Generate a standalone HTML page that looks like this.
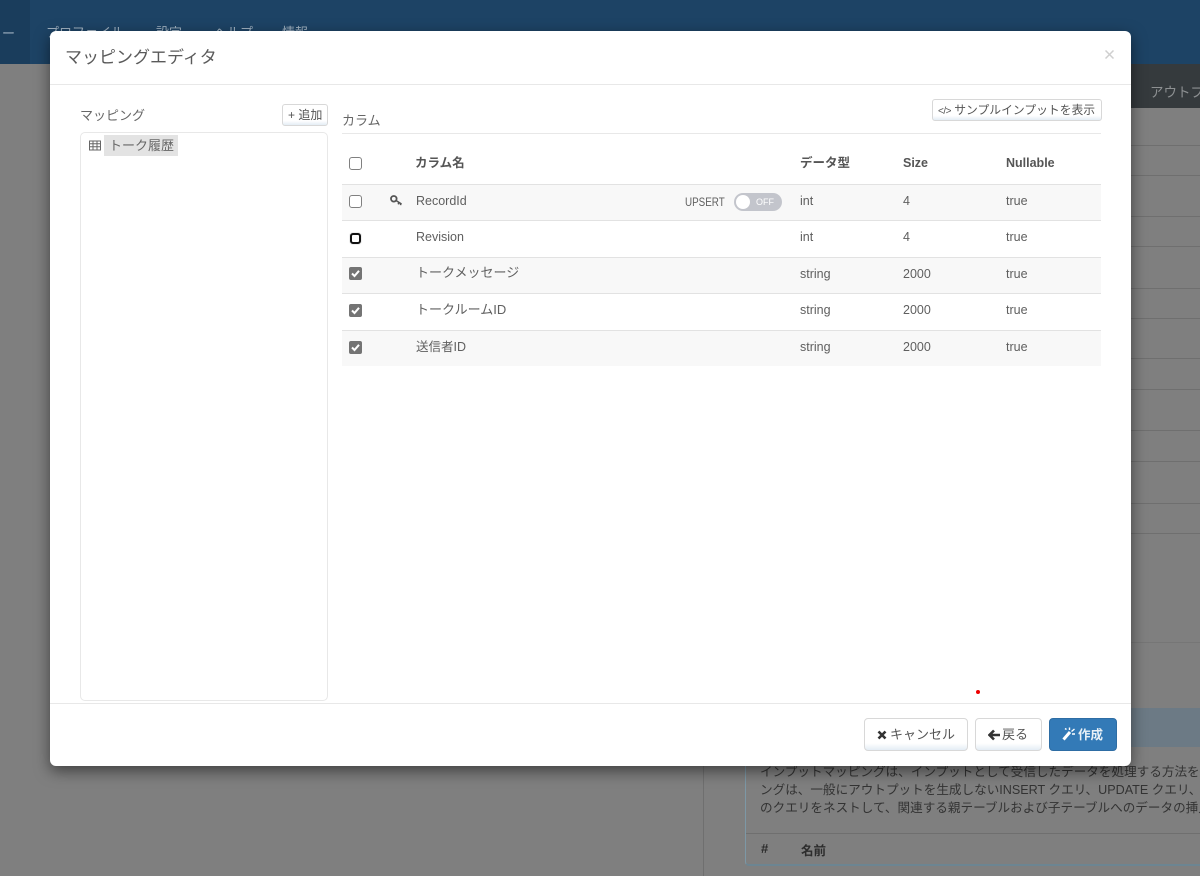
<!DOCTYPE html>
<html lang="ja"><head><meta charset="utf-8">
<style>
*{box-sizing:border-box}
html,body{margin:0;padding:0;width:1200px;height:876px;overflow:hidden;background:#7f7f7f;font-family:"Liberation Sans","Noto Sans CJK JP",sans-serif;color:#555}
.a{position:absolute;white-space:nowrap}
.ln{position:absolute;height:1px;background:#6f6f6f;left:1131px;width:69px}
.modal{position:absolute;left:50px;top:31px;width:1081px;height:735px;background:#fff;border-radius:6px;box-shadow:0 5px 15px rgba(0,0,0,.5)}
.r{position:absolute;left:342px;width:759px}
.t{position:absolute;font-size:12.5px;color:#5f5f5f;white-space:nowrap}
.cb{position:absolute;left:349px;width:13px;height:13px;border:1px solid #808080;border-radius:3px;background:#fff}
.cb.c{background:#747474;border-color:#747474;border-radius:2px}
.cb svg{position:absolute;left:0;top:0}
.btn{position:absolute;border:1px solid #d8d8d8;border-radius:4px;background:linear-gradient(#fff 78%,#e4edf5);white-space:nowrap}
</style></head><body>
<div class="a" style="left:0;top:0;width:1200px;height:64px;background:#1d4365"></div>
<div class="a" style="left:0;top:0;width:30px;height:64px;background:#1a3d5c"></div>
<div class="a" style="left:2px;top:23px;font-size:13px;color:#9fb0bf">ー</div>
<div class="a" style="left:46px;top:22px;font-size:13px;color:#9fb0bf">プロファイル</div>
<div class="a" style="left:156px;top:22px;font-size:13px;color:#9fb0bf">設定</div>
<div class="a" style="left:214px;top:22px;font-size:13px;color:#9fb0bf">ヘルプ</div>
<div class="a" style="left:282px;top:22px;font-size:13px;color:#9fb0bf">情報</div>
<div class="a" style="left:1131px;top:64px;width:69px;height:44px;background:#353a3d"></div>
<div class="a" style="left:1150px;top:81px;font-size:13.500px;color:#8d9092">アウトプット</div>
<div class="ln" style="top:145px"></div><div class="ln" style="top:175px"></div><div class="ln" style="top:216px"></div><div class="ln" style="top:246px"></div><div class="ln" style="top:288px"></div><div class="ln" style="top:318px"></div><div class="ln" style="top:358px"></div><div class="ln" style="top:389px"></div><div class="ln" style="top:430px"></div><div class="ln" style="top:461px"></div><div class="ln" style="top:503px"></div><div class="ln" style="top:533px"></div><div class="ln" style="top:642px;background:#767676"></div>
<div class="a" style="left:703px;top:766px;width:1px;height:110px;background:#6f6f6f"></div>
<div class="a" style="left:745px;top:708px;width:455px;height:158px;border:1px solid #7d98a6;border-right:0;border-radius:4px 0 0 4px;border-bottom:2px solid #6c8592"></div>
<div class="a" style="left:746px;top:708px;width:454px;height:39px;background:#6c7a85"></div>
<div class="a" style="left:760px;top:763px;width:440px;overflow:hidden;font-size:12.600px;color:#333;line-height:18px">インプットマッピングは、インプットとして受信したデータを処理する方法を定義します。マッピ<br>ングは、一般にアウトプットを生成しないINSERT クエリ、UPDATE クエリ、 および DELETE クエリ<br>のクエリをネストして、関連する親テーブルおよび子テーブルへのデータの挿入を行います。</div>
<div class="a" style="left:746px;top:833px;width:454px;height:1px;background:#6f6f6f"></div>
<div class="a" style="left:761px;top:841px;font-size:13px;font-weight:bold;color:#2c2c2c">#</div>
<div class="a" style="left:801px;top:840px;font-size:12.500px;font-weight:bold;color:#2c2c2c">名前</div>

<div class="modal"></div>
<div class="a" style="left:50px;top:84px;width:1081px;height:1px;background:#e8e8e8"></div>
<div class="a" style="left:50px;top:703px;width:1081px;height:1px;background:#e8e8e8"></div>
<div class="a" style="left:65px;top:46px;font-size:17px;line-height:24px;color:#5a5a5a">マッピングエディタ</div>
<svg class="a" style="left:1105px;top:50px" width="9" height="9" viewBox="0 0 9 9"><path d="M.5.5l8 8M8.500.5l-8 8" stroke="#cfcfcf" stroke-width="1.500"/></svg>

<div class="a" style="left:80px;top:107px;font-size:13px;line-height:18px;color:#666">マッピング</div>
<div class="btn" style="left:282px;top:104px;width:46px;height:22px;font-size:12px;line-height:20px;padding-left:5px;color:#555;border-radius:3px">+ 追加</div>
<div class="a" style="left:80px;top:132px;width:248px;height:569px;border:1px solid #e8e8e8;border-radius:5px"></div>
<svg class="a" style="left:89px;top:140px" width="12" height="11" viewBox="0 0 12 11"><path d="M.5 1h11v9H.5zM.5 3.800h11M.5 6.800h11M4 1v9M8 1v9" fill="none" stroke="#666" stroke-width="1"/></svg>
<div class="a" style="left:104px;top:135px;width:74px;height:21px;background:#e3e3e3;font-size:13px;line-height:21px;padding-left:5px;color:#666">トーク履歴</div>

<div class="a" style="left:342px;top:112px;font-size:13px;line-height:18px;color:#666">カラム</div>
<div class="btn" style="left:932px;top:99px;width:170px;height:22px;font-size:11.800px;line-height:20px;padding-left:5px;color:#555;border-radius:3px"><span style="font-size:10px;letter-spacing:-.5px">&lt;/&gt;</span> <span>サンプルインプットを表示</span></div>
<div class="r" style="top:133px;height:1px;background:#e8e8e8"></div>

<div class="r" style="top:184px;height:37px;background:#f8f8f8;border-top:1px solid #e2e2e2;border-bottom:1px solid #e2e2e2"></div>
<div class="r" style="top:257px;height:37px;background:#f8f8f8;border-top:1px solid #e2e2e2;border-bottom:1px solid #e2e2e2"></div>
<div class="r" style="top:330px;height:36px;background:#f8f8f8;border-top:1px solid #e2e2e2"></div>

<div class="cb" style="top:157px"></div>
<div class="t" style="left:415px;top:152px;font-weight:bold;color:#555;font-size:12.500px">カラム名</div>
<div class="t" style="left:800px;top:152px;font-weight:bold;color:#555;font-size:12.500px">データ型</div>
<div class="t" style="left:903px;top:156px;font-weight:bold;color:#555">Size</div>
<div class="t" style="left:1006px;top:156px;font-weight:bold;color:#555">Nullable</div>

<div class="cb" style="top:195px"></div>
<svg class="a" style="left:390px;top:195px" width="13" height="11" viewBox="0 0 13 11"><circle cx="3.800" cy="3.800" r="2.800" fill="none" stroke="#555" stroke-width="1.800"/><path d="M6 5.500l5.500 3.500M9 7.500l-.8 1.800M11 8.500l-.6 1.600" stroke="#555" stroke-width="1.600" fill="none"/></svg>
<div class="t" style="left:416px;top:194px">RecordId</div>
<div class="t" style="left:685px;top:195px;font-size:12px;transform:scaleX(.82);transform-origin:0 0">UPSERT</div>
<div class="a" style="left:734px;top:193px;width:48px;height:18px;border-radius:9px;background:#c3c5cc"></div>
<div class="a" style="left:736px;top:195px;width:14px;height:14px;border-radius:50%;background:#fff"></div>
<div class="a" style="left:756px;top:197px;font-size:9px;line-height:10px;color:#fff">OFF</div>
<div class="t" style="left:800px;top:194px">int</div><div class="t" style="left:903px;top:194px">4</div><div class="t" style="left:1006px;top:194px">true</div>

<div class="cb" style="top:233px;left:350px;width:11px;height:11px;border:2px solid #111;border-radius:3px;box-shadow:0 0 0 1px #eee"></div>
<div class="t" style="left:416px;top:230px">Revision</div>
<div class="t" style="left:800px;top:230px">int</div><div class="t" style="left:903px;top:230px">4</div><div class="t" style="left:1006px;top:230px">true</div>

<div class="cb c" style="top:267px"><svg width="11" height="11" viewBox="0 0 11 11"><path d="M2 5.500l2.500 2.500L9 2.800" fill="none" stroke="#fff" stroke-width="2"/></svg></div>
<div class="t" style="left:416px;top:262px;font-size:13px">トークメッセージ</div>
<div class="t" style="left:800px;top:267px">string</div><div class="t" style="left:903px;top:267px">2000</div><div class="t" style="left:1006px;top:267px">true</div>

<div class="cb c" style="top:304px"><svg width="11" height="11" viewBox="0 0 11 11"><path d="M2 5.500l2.500 2.500L9 2.800" fill="none" stroke="#fff" stroke-width="2"/></svg></div>
<div class="t" style="left:416px;top:299px;font-size:13px">トークルームID</div>
<div class="t" style="left:800px;top:303px">string</div><div class="t" style="left:903px;top:303px">2000</div><div class="t" style="left:1006px;top:303px">true</div>

<div class="cb c" style="top:341px"><svg width="11" height="11" viewBox="0 0 11 11"><path d="M2 5.500l2.500 2.500L9 2.800" fill="none" stroke="#fff" stroke-width="2"/></svg></div>
<div class="t" style="left:416px;top:336px;font-size:12.500px">送信者ID</div>
<div class="t" style="left:800px;top:340px">string</div><div class="t" style="left:903px;top:340px">2000</div><div class="t" style="left:1006px;top:340px">true</div>

<div class="a" style="left:976px;top:690px;width:4px;height:4px;border-radius:50%;background:#e00"></div>

<div class="btn" style="left:864px;top:718px;width:104px;height:33px;font-size:13px;line-height:32px;padding-left:25px;color:#555">キャンセル</div>
<svg class="a" style="left:877px;top:730px" width="10" height="10" viewBox="0 0 10 10"><path d="M1.500 1.500l7 7M8.500 1.500l-7 7" stroke="#333" stroke-width="2.600"/></svg>
<div class="btn" style="left:975px;top:718px;width:67px;height:33px;font-size:13px;line-height:32px;padding-left:26px;color:#555">戻る</div>
<svg class="a" style="left:988px;top:729px" width="12" height="12" viewBox="0 0 12 12"><path d="M6 1.500L1.500 6 6 10.500M2 6h10" fill="none" stroke="#333" stroke-width="2.600"/></svg>
<div class="a" style="left:1049px;top:718px;width:68px;height:33px;border-radius:4px;background:#337ab7;border:1px solid #2e6da4;font-size:12.500px;font-weight:bold;line-height:32px;padding-left:28px;color:#e9f1f7">作成</div>
<svg class="a" style="left:1062px;top:727px" width="13" height="14" viewBox="0 0 13 14"><path d="M1.500 12.500L8 5" stroke="#fff" stroke-width="3"/><path d="M9.500 4.500l3-2.500M7.500 3V.5M10 7h3M4.500 2.500l-1.500-1" stroke="#fff" stroke-width="1.400"/></svg>
</body></html>
